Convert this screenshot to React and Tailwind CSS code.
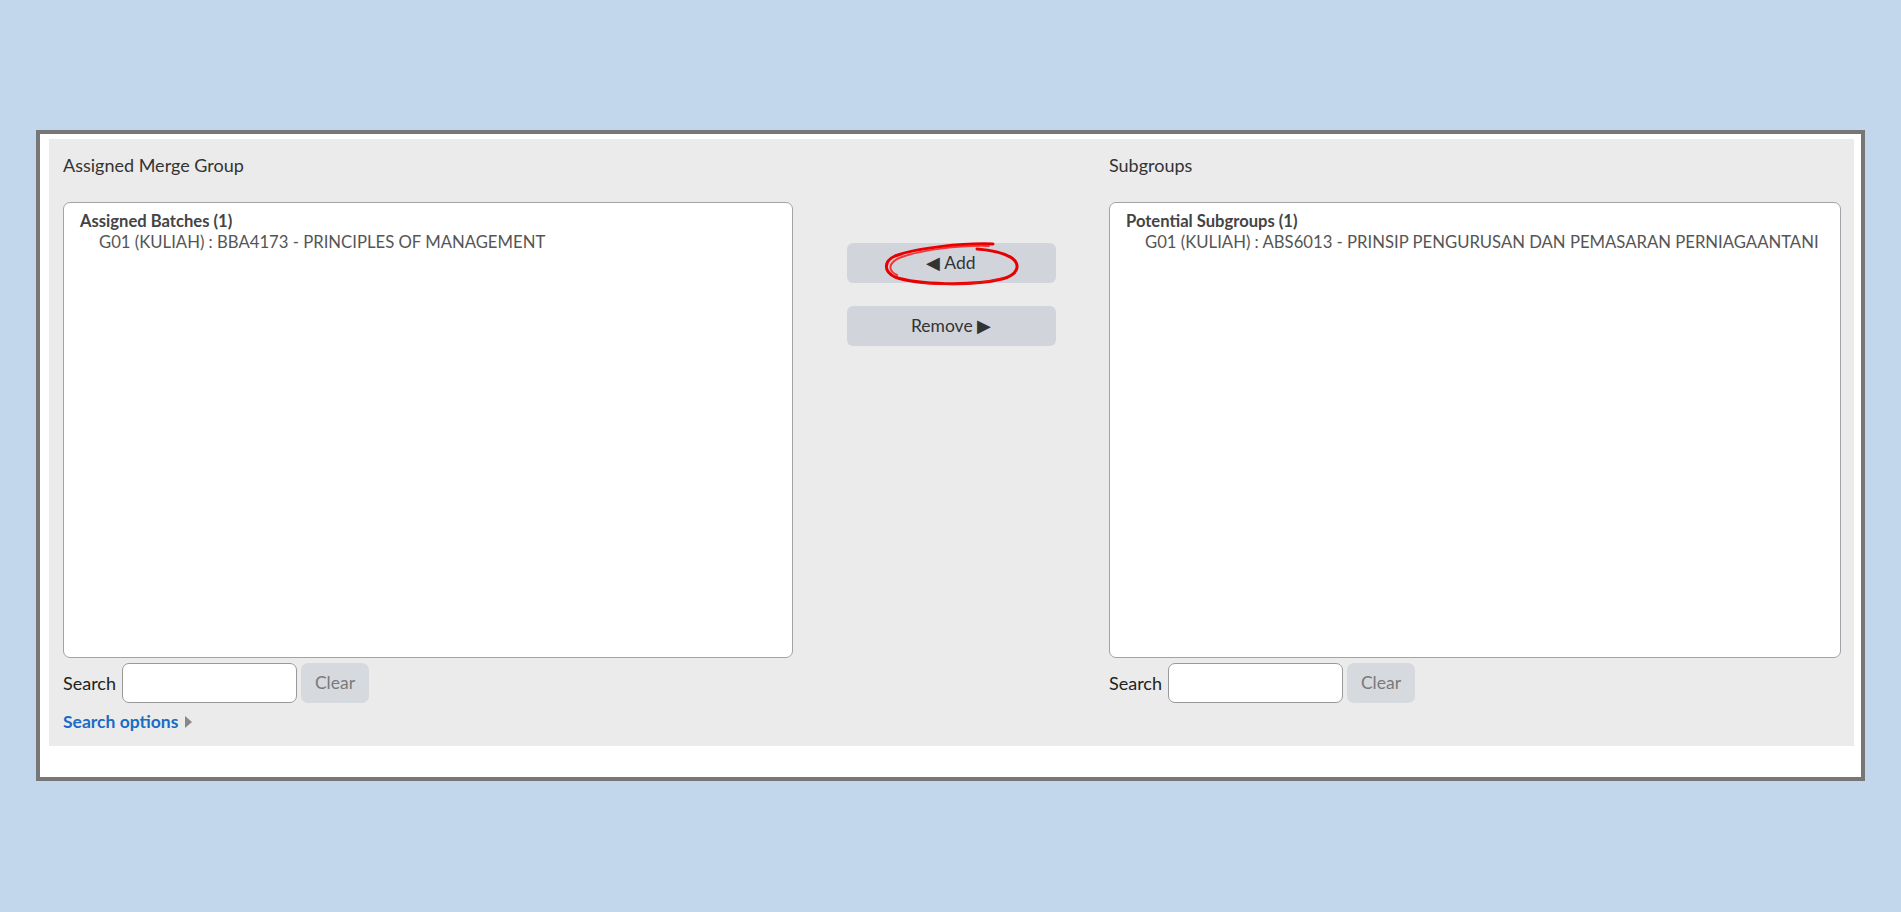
import React from 'react'

function ListBox({ title, item }) {
  return (
    <div className="h-[456px] rounded-[7px] border border-[#a0a3a8] bg-white pl-[16px] pt-[8px]">
      <div className="text-[16.6px] font-bold leading-[21px] text-[#444]">{title}</div>
      <div className="pl-[19px] text-[16.7px] leading-[21px] text-[#555]">{item}</div>
    </div>
  )
}

function SearchRow() {
  return (
    <div className="mt-[5px] flex h-[40px] items-center">
      <span className="text-[18px] text-[#222]">Search</span>
      <input className="ml-[6px] h-[40px] w-[175px] rounded-[7px] border border-[#999] bg-white px-2 outline-none" />
      <button className="ml-[4px] h-[40px] w-[68px] rounded-[7px] bg-[#d6d9dd] text-[17.5px] text-[#7a7a7a]">Clear</button>
    </div>
  )
}

function RedCircle() {
  return (
    <svg className="pointer-events-none absolute left-[34px] top-[-2px]" width="145" height="48" viewBox="0 0 145 48" fill="none">
      <path
        d="M112 3 C 82 2, 34 7, 14 15 C 3 20, 2 30, 14 36 C 36 44, 92 45, 121 38 C 137 34, 140 24, 131 17 C 123 12, 110 9, 96 8"
        stroke="#e60000"
        strokeWidth="3"
        strokeLinecap="round"
      />
      <path
        d="M108 5 C 80 4, 38 9, 18 17 C 8 22, 6 29, 16 34"
        stroke="#ff1a1a"
        strokeWidth="2"
        strokeLinecap="round"
        opacity="0.85"
      />
      <path
        d="M40 42 C 70 45, 100 43, 122 37"
        stroke="#f01010"
        strokeWidth="1.5"
        strokeLinecap="round"
        opacity="0.75"
      />
    </svg>
  )
}

export default function App() {
  return (
    <div className="min-h-[912px] bg-[#c2d7eb] pt-[130px] pl-[36px] font-['Lato','Open_Sans',sans-serif]">
      <div className="w-[1829px] border-4 border-[#777] bg-white pt-[5px] pl-[9px] pr-[7px] pb-[31px]">
        <div className="flex bg-[#ebebeb] pl-[14px] pr-[13px] pt-[14px] pb-[14px]">
          {/* left column */}
          <div className="w-[730px]">
            <div className="mb-[25px] text-[18px] leading-[24px] text-[#333]">Assigned Merge Group</div>
            <ListBox title="Assigned Batches (1)" item="G01 (KULIAH) : BBA4173 - PRINCIPLES OF MANAGEMENT" />
            <SearchRow />
            <div className="mt-[9px] flex items-center gap-[7px] leading-[20px]">
              <span className="text-[17.5px] font-bold text-[#1a6cc4]">Search options</span>
              <svg width="7" height="12" viewBox="0 0 7 12"><path d="M0 0 L7 6 L0 12 Z" fill="#888" /></svg>
            </div>
          </div>

          {/* middle buttons */}
          <div className="flex w-[316px] flex-col items-center pt-[90px]">
            <div className="relative">
              <button className="h-[40px] w-[209px] rounded-[6px] bg-[#d1d5db] text-[17.5px] text-[#333]">◀ Add</button>
              <RedCircle />
            </div>
            <button className="mt-[23px] h-[40px] w-[209px] rounded-[6px] bg-[#d1d5db] text-[17.5px] text-[#333]">Remove ▶</button>
          </div>

          {/* right column */}
          <div className="w-[732px]">
            <div className="mb-[25px] text-[18px] leading-[24px] text-[#333]">Subgroups</div>
            <ListBox title="Potential Subgroups (1)" item="G01 (KULIAH) : ABS6013 - PRINSIP PENGURUSAN DAN PEMASARAN PERNIAGAANTANI" />
            <SearchRow />
          </div>
        </div>
      </div>
    </div>
  )
}
